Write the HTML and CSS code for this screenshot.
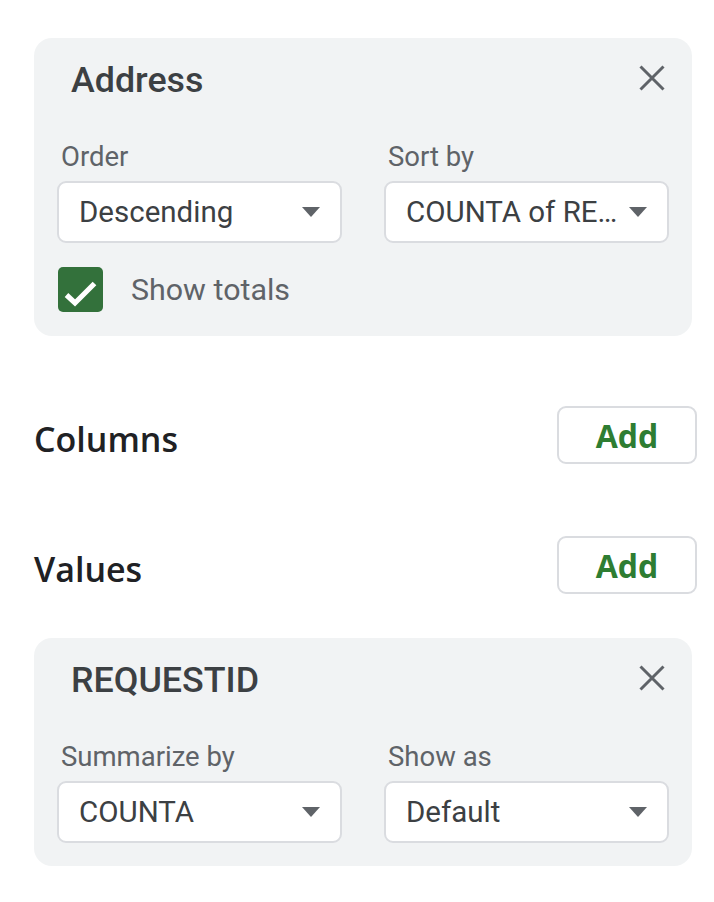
FILE: index.html
```html
<!DOCTYPE html>
<html>
<head>
<meta charset="utf-8">
<link rel="stylesheet" href="styles.css">
</head>
<body>
<div class="panel">
  <section class="card">
    <div class="card-head">
      <span class="card-title">Address</span>
      <svg class="close" width="26" height="26" viewBox="0 0 26 26"><path d="M1.5 1.5 L24.5 24.5 M24.5 1.5 L1.5 24.5" stroke="#5f6368" stroke-width="3" fill="none"/></svg>
    </div>
    <div class="fields">
      <div class="field">
        <div class="label">Order</div>
        <div class="select"><span class="select-text">Descending</span><span class="caret"></span></div>
      </div>
      <div class="field">
        <div class="label">Sort by</div>
        <div class="select"><span class="select-text">COUNTA of RE…</span><span class="caret"></span></div>
      </div>
    </div>
    <div class="check-row">
      <span class="checkbox"><svg width="45" height="45" viewBox="0 0 45 45"><path d="M8.5 28 L17 36 L36.5 16.5" stroke="#fff" stroke-width="5.2" fill="none"/></svg></span>
      <span class="check-label">Show totals</span>
    </div>
  </section>

  <div class="section-row first">
    <span class="section-title">Columns</span>
    <button class="add-btn">Add</button>
  </div>
  <div class="section-row">
    <span class="section-title">Values</span>
    <button class="add-btn">Add</button>
  </div>

  <section class="card second">
    <div class="card-head">
      <span class="card-title">REQUESTID</span>
      <svg class="close" width="26" height="26" viewBox="0 0 26 26"><path d="M1.5 1.5 L24.5 24.5 M24.5 1.5 L1.5 24.5" stroke="#5f6368" stroke-width="3" fill="none"/></svg>
    </div>
    <div class="fields">
      <div class="field">
        <div class="label">Summarize by</div>
        <div class="select"><span class="select-text">COUNTA</span><span class="caret"></span></div>
      </div>
      <div class="field">
        <div class="label">Show as</div>
        <div class="select"><span class="select-text">Default</span><span class="caret"></span></div>
      </div>
    </div>
  </section>
</div>
</body>
</html>
```

FILE: styles.css
```css
html, body {
  margin: 0;
  padding: 0;
  background: #ffffff;
}
body {
  font-family: Roboto, "Liberation Sans", Arial, sans-serif;
  width: 714px;
  height: 902px;
  overflow: hidden;
}
.panel {
  padding: 38px 17px 0 34px;
  display: flex;
  flex-direction: column;
}
.card {
  width: 658px;
  box-sizing: border-box;
  background: #f1f3f4;
  border-radius: 18px;
  padding: 22px 23px 24px 23px;
  display: flex;
  flex-direction: column;
}
.card.second {
  margin-top: 44px;
  padding-bottom: 23px;
}
.card-head {
  display: flex;
  align-items: center;
  justify-content: space-between;
  height: 40px;
  padding-left: 14px;
  padding-right: 4px;
}
.card-head .close {
  margin-top: -4px;
}
.card-title {
  font-size: 35.8px;
  line-height: 40px;
  font-weight: 500;
  color: #3c4043;
}
.close {
  display: block;
}
.fields {
  display: grid;
  grid-template-columns: 285px 285px;
  column-gap: 42px;
  margin-top: 41px;
}
.field {
  display: flex;
  flex-direction: column;
  min-width: 0;
}
.label {
  font-size: 27.5px;
  line-height: 32px;
  color: #5f6368;
  padding-left: 4px;
  margin-bottom: 8px;
}
.select {
  height: 62px;
  box-sizing: border-box;
  border: 2px solid #dadce0;
  border-radius: 9px;
  background: #ffffff;
  display: flex;
  align-items: center;
  padding: 0 20px 0 20px;
  gap: 10px;
}
.select-text {
  flex: 1;
  min-width: 0;
  font-size: 29.5px;
  color: #3c4043;
  white-space: nowrap;
}
.caret {
  width: 0;
  height: 0;
  border-left: 9.5px solid transparent;
  border-right: 9.5px solid transparent;
  border-top: 10px solid #5f6368;
  flex: none;
}
.check-row {
  display: flex;
  align-items: center;
  margin-top: 24px;
  padding-left: 1px;
}
.checkbox {
  width: 45px;
  height: 45px;
  background: #33713b;
  border-radius: 5px;
  display: block;
}
.checkbox svg {
  display: block;
}
.check-label {
  margin-left: 28px;
  font-size: 30.4px;
  color: #5f6368;
}
.section-row {
  display: flex;
  align-items: center;
  justify-content: space-between;
  margin-top: 72px;
}
.section-row.first {
  margin-top: 70px;
}
.section-title {
  font-family: "Open Sans", Roboto, sans-serif;
  font-size: 34px;
  line-height: 40px;
  font-weight: 600;
  color: #202124;
  padding-top: 8px;
}
.add-btn {
  width: 140px;
  height: 58px;
  box-sizing: border-box;
  border: 2px solid #dadce0;
  border-radius: 9px;
  background: #ffffff;
  font-family: "Open Sans", Roboto, sans-serif;
  font-size: 32px;
  font-weight: 700;
  color: #2e7d32;
  padding: 0;
  display: flex;
  align-items: center;
  justify-content: center;
}
```
